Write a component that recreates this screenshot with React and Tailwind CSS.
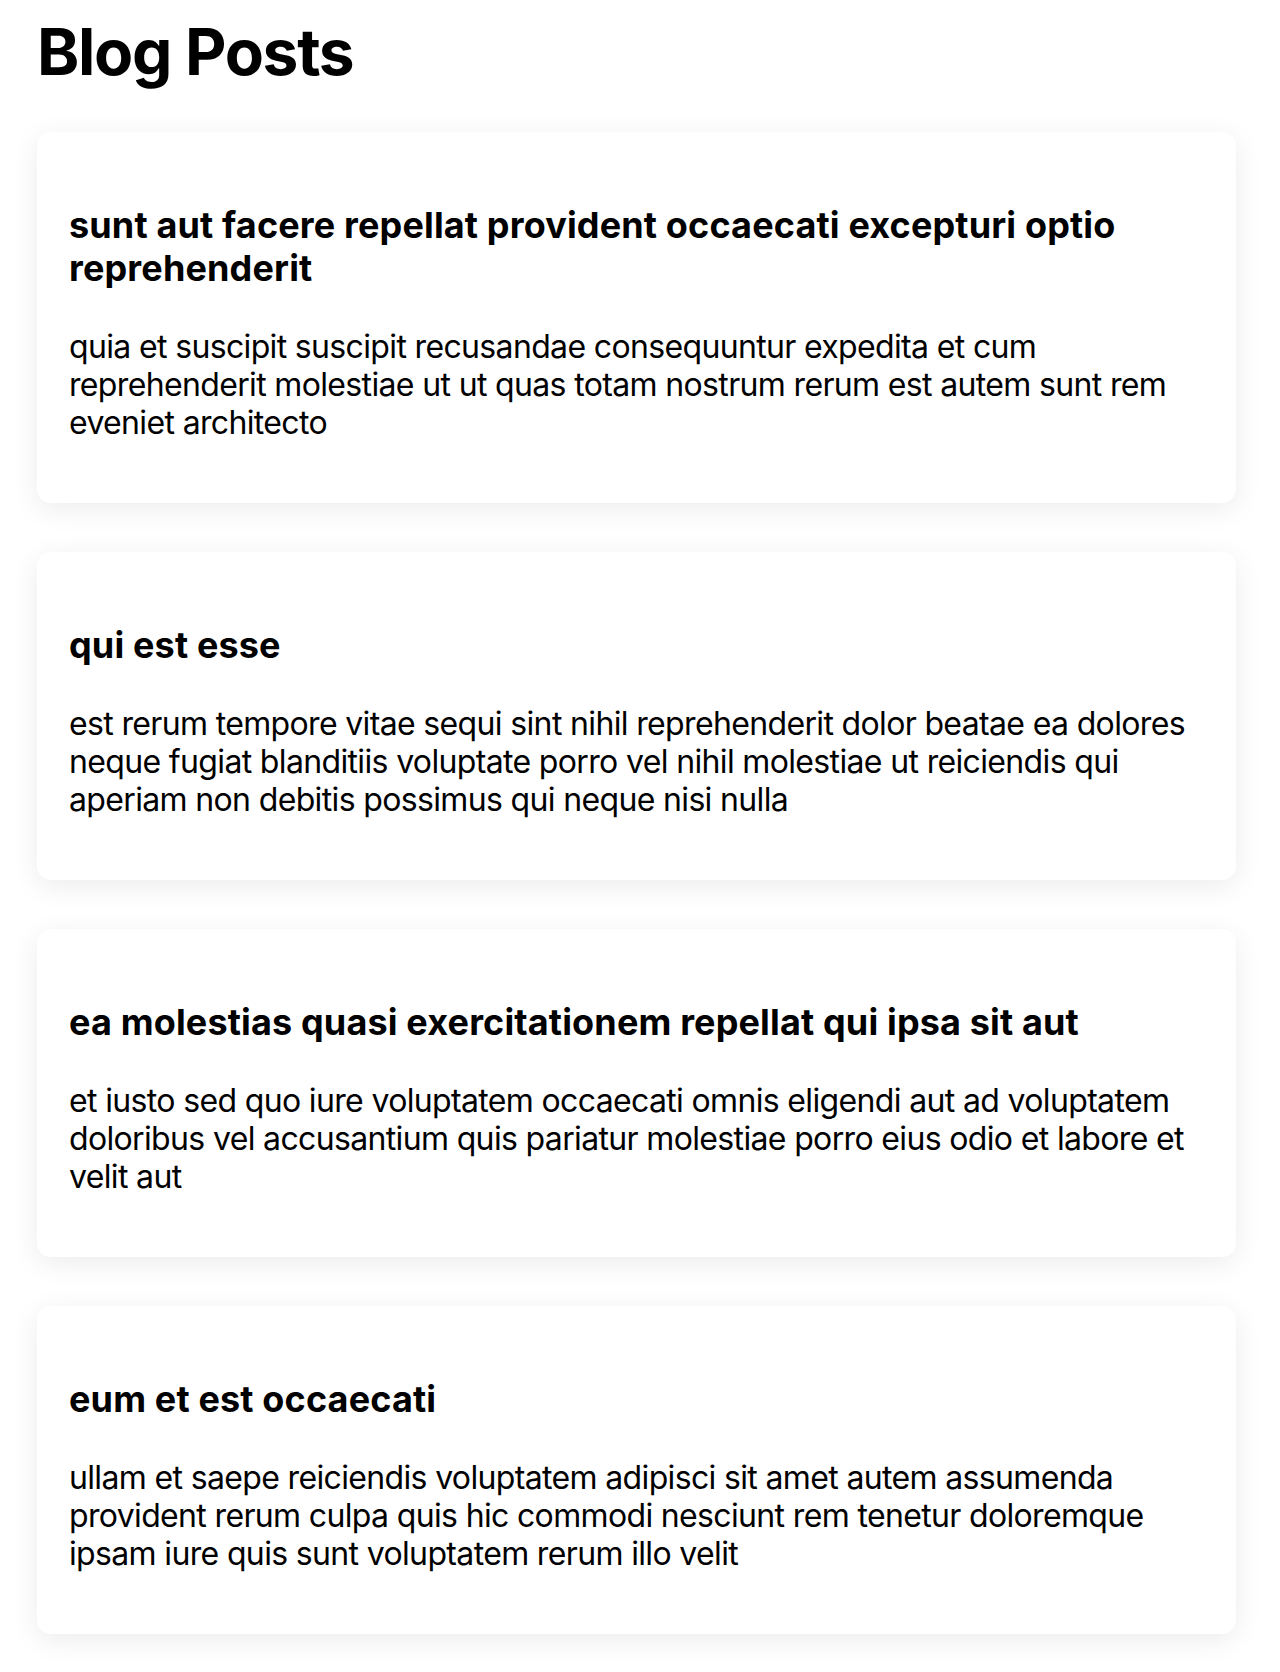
import React from "react";

const posts = [
  {
    title: "sunt aut facere repellat provident occaecati excepturi optio reprehenderit",
    body: "quia et suscipit suscipit recusandae consequuntur expedita et cum reprehenderit molestiae ut ut quas totam nostrum rerum est autem sunt rem eveniet architecto",
  },
  {
    title: "qui est esse",
    body: "est rerum tempore vitae sequi sint nihil reprehenderit dolor beatae ea dolores neque fugiat blanditiis voluptate porro vel nihil molestiae ut reiciendis qui aperiam non debitis possimus qui neque nisi nulla",
  },
  {
    title: "ea molestias quasi exercitationem repellat qui ipsa sit aut",
    body: "et iusto sed quo iure voluptatem occaecati omnis eligendi aut ad voluptatem doloribus vel accusantium quis pariatur molestiae porro eius odio et labore et velit aut",
  },
  {
    title: "eum et est occaecati",
    body: "ullam et saepe reiciendis voluptatem adipisci sit amet autem assumenda provident rerum culpa quis hic commodi nesciunt rem tenetur doloremque ipsam iure quis sunt voluptatem rerum illo velit",
  },
];

export default function App() {
  return (
    <div className="min-h-[1672px] bg-white text-black font-['Inter',sans-serif] pl-[37px] pt-[13px]">
      <h1 className="text-[64px] font-bold leading-[77px] tracking-[-1.3px]">Blog Posts</h1>
      <div className="mt-[42px] flex w-[1199px] flex-col gap-[49px]">
        {posts.map((p) => (
          <div
            key={p.title}
            className="rounded-[14px] bg-white px-8 pt-[72px] pb-[61px] shadow-[0_6px_28px_rgba(0,0,0,0.08)]"
          >
            <h2 className="text-[36px] font-bold leading-[43px] tracking-[0.15px]">{p.title}</h2>
            <p className="mt-[38px] text-[32px] leading-[38px] tracking-[-0.65px]">{p.body}</p>
          </div>
        ))}
      </div>
    </div>
  );
}
